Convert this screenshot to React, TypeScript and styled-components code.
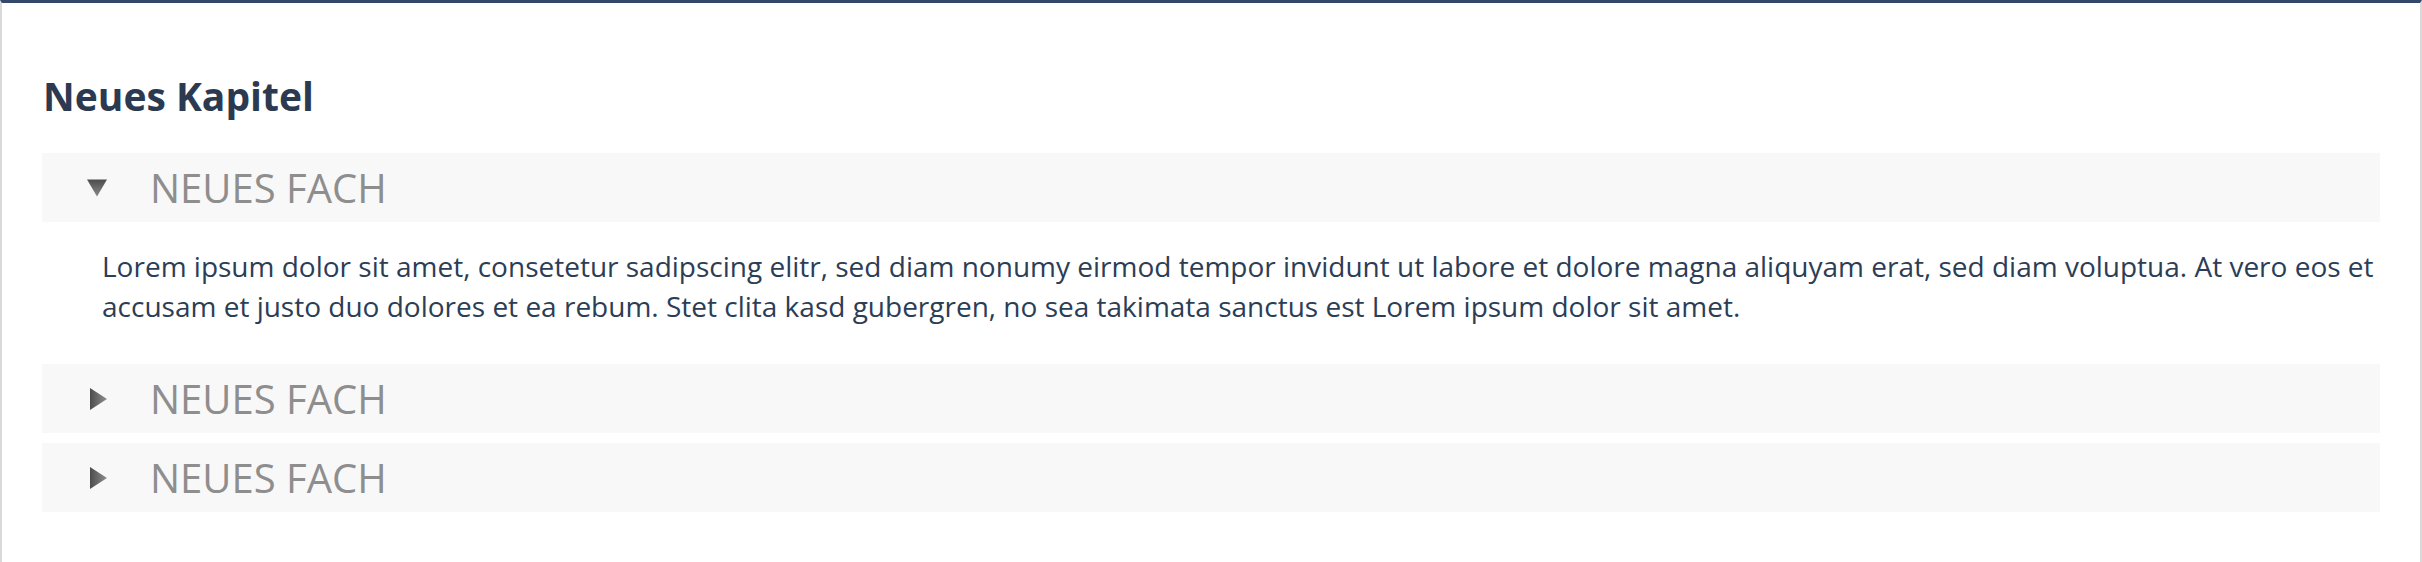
import * as React from "react";
import styled, { createGlobalStyle } from "styled-components";

const GlobalStyle = createGlobalStyle`
  html, body {
    margin: 0;
    padding: 0;
    background: #ffffff;
  }
  * {
    box-sizing: border-box;
  }
`;

interface Subject {
  title: string;
  text?: string;
}

const subjects: Subject[] = [
  {
    title: "NEUES FACH",
    text: "Lorem ipsum dolor sit amet, consetetur sadipscing elitr, sed diam nonumy eirmod tempor invidunt ut labore et dolore magna aliquyam erat, sed diam voluptua. At vero eos et accusam et justo duo dolores et ea rebum. Stet clita kasd gubergren, no sea takimata sanctus est Lorem ipsum dolor sit amet.",
  },
  { title: "NEUES FACH" },
  { title: "NEUES FACH" },
];

const Arrow = ({ open }: { open: boolean }) => (
  <ArrowBox>
    <svg width="20" height="22" viewBox="0 0 20 22">
      <defs>
        <linearGradient id="arrowDown" x1="0" y1="0" x2="0" y2="1">
          <stop offset="0" stopColor="#4c4c4c" />
          <stop offset="1" stopColor="#8a8a8a" />
        </linearGradient>
        <linearGradient id="arrowRight" x1="0" y1="0" x2="1" y2="0">
          <stop offset="0" stopColor="#4c4c4c" />
          <stop offset="1" stopColor="#8f8f8f" />
        </linearGradient>
      </defs>
      {open ? (
        <polygon points="0,2.5 20,2.5 10,19.5" fill="url(#arrowDown)" />
      ) : (
        <polygon points="3,0 20,11 3,22" fill="url(#arrowRight)" />
      )}
    </svg>
  </ArrowBox>
);

const App = () => {
  const [openIndex, setOpenIndex] = React.useState<number | null>(0);

  return (
    <>
      <GlobalStyle />
      <Chapter>
        <ChapterTitle>Neues Kapitel</ChapterTitle>
        <SubjectList>
          {subjects.map((subject, i) => {
            const open = openIndex === i;
            return (
              <SubjectItem key={i}>
                <SubjectHeader onClick={() => setOpenIndex(open ? null : i)}>
                  <Arrow open={open} />
                  <SubjectTitle>{subject.title}</SubjectTitle>
                </SubjectHeader>
                {open && subject.text && <SubjectBody>{subject.text}</SubjectBody>}
              </SubjectItem>
            );
          })}
        </SubjectList>
      </Chapter>
    </>
  );
};

const Chapter = styled.section`
  min-height: 100vh;
  background: #ffffff;
  border-top: 3px solid #34486c;
  border-left: 2px solid #d9d9d9;
  border-right: 2px solid #d9d9d9;
  padding: 69px 40px 0 40px;
  font-family: "Open Sans", "Noto Sans", sans-serif;
`;

const ChapterTitle = styled.h2`
  margin: 0 0 33px 1px;
  font-size: 39px;
  line-height: 48px;
  font-weight: 700;
  color: #2b3a50;
`;

const SubjectList = styled.div`
  display: flex;
  flex-direction: column;
  gap: 10px;
`;

const SubjectItem = styled.div`
  display: flex;
  flex-direction: column;
`;

const SubjectHeader = styled.div`
  display: flex;
  align-items: center;
  height: 69px;
  padding-left: 45px;
  background: #f8f8f8;
  cursor: pointer;
`;

const ArrowBox = styled.span`
  display: flex;
  width: 20px;
  height: 22px;
  margin-right: 43px;
`;

const SubjectTitle = styled.span`
  font-size: 40px;
  line-height: 1;
  font-weight: 400;
  color: #8e8e8e;
`;

const SubjectBody = styled.p`
  margin: 0;
  padding: 24px 0 28px 60px;
  font-size: 28px;
  line-height: 40px;
  color: #2c3d56;
`;

export default App;
